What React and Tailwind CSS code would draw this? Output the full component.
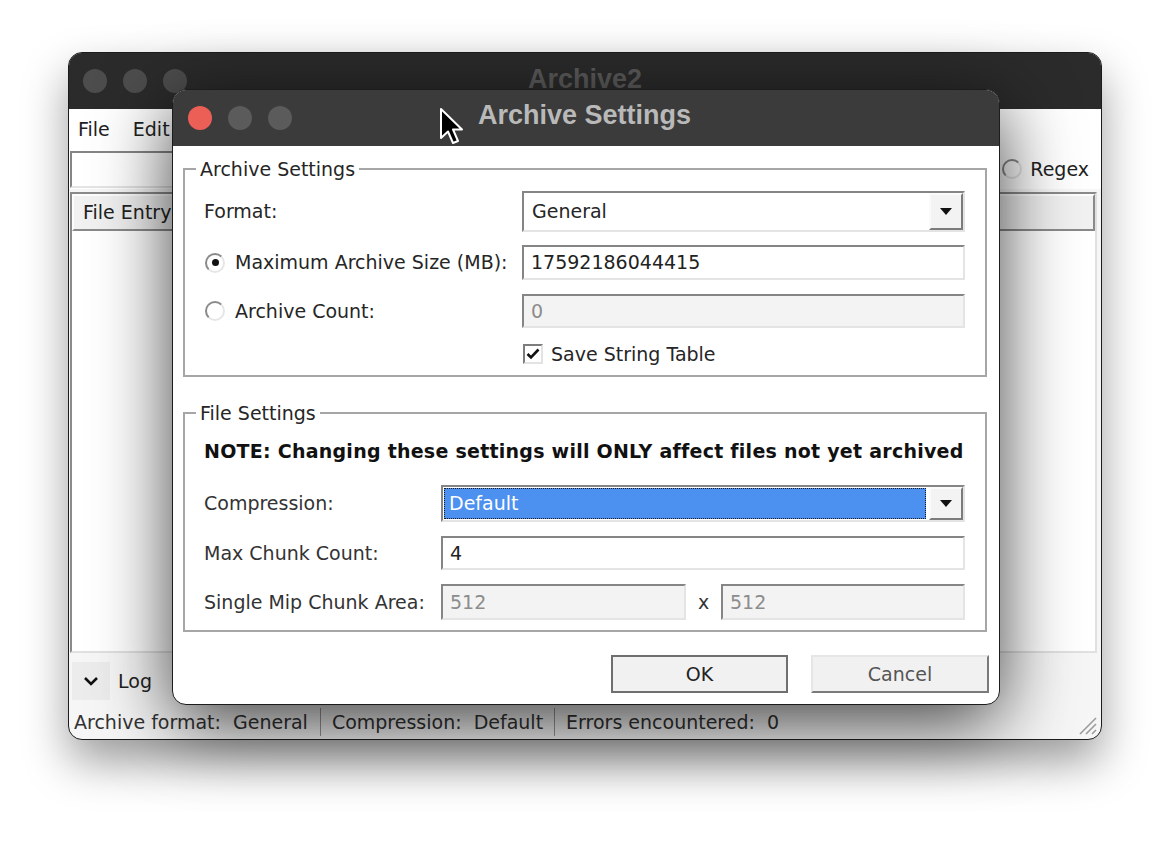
import React from 'react';

const UI = "font-['DejaVu_Sans',sans-serif]";
const TITLE = "font-['Liberation_Sans',Arial,sans-serif] font-bold text-[27px]";

const SUNKEN = 'border-2 border-t-[#858585] border-l-[#858585] border-b-[#e4e4e4] border-r-[#e4e4e4]';

function Light({ color }) {
  return <div className={`w-[24px] h-[24px] rounded-full ${color}`} />;
}

function TextBox({ value, disabled, className = '' }) {
  return (
    <div
      className={`${SUNKEN} flex items-center px-[7px] text-[19px] ${
        disabled ? 'bg-[#f3f3f3] text-[#8c8c8c]' : 'bg-white text-[#222]'
      } ${className}`}
    >
      {value}
    </div>
  );
}

function DropArrow() {
  return (
    <div className="w-[34px] self-stretch bg-[#f3f3f3] border-2 border-t-[#fafafa] border-l-[#fafafa] border-b-[#7c7c7c] border-r-[#7c7c7c] flex items-center justify-center">
      <svg width="12" height="8" viewBox="0 0 12 8">
        <path d="M0 0 L12 0 L6 7 Z" fill="#111" />
      </svg>
    </div>
  );
}

function Radio({ checked }) {
  return (
    <div className="w-[20px] h-[20px] rounded-full bg-white border-2 border-t-[#8a8a8a] border-l-[#8a8a8a] border-b-[#e6e6e6] border-r-[#e6e6e6] flex items-center justify-center shrink-0">
      {checked && <div className="w-[7px] h-[7px] rounded-full bg-[#111]" />}
    </div>
  );
}

function Checkbox() {
  return (
    <div className="w-[20px] h-[20px] bg-white border-2 border-t-[#7d7d7d] border-l-[#7d7d7d] border-b-[#e3e3e3] border-r-[#e3e3e3] flex items-center justify-center shrink-0">
      <svg width="14" height="12" viewBox="0 0 14 12">
        <path d="M1.5 6 L5 9.5 L12.5 1.5" stroke="#111" strokeWidth="2.6" fill="none" />
      </svg>
    </div>
  );
}

function MainWindow() {
  return (
    <div className={`absolute left-[68px] top-[52px] w-[1034px] h-[688px] rounded-[14px] border border-[#1c1c1c] overflow-hidden flex flex-col bg-[#f6f6f6] shadow-[0_22px_45px_rgba(0,0,0,0.38)] ${UI}`}>
      <div className="h-[56px] bg-[#2b2b2b] relative flex items-center pl-[14px] gap-[16px] shrink-0">
        <Light color="bg-[#4d4d4d]" />
        <Light color="bg-[#4d4d4d]" />
        <Light color="bg-[#4d4d4d]" />
        <div className={`absolute inset-0 pb-[4px] flex items-center justify-center text-[#5b5b5b] ${TITLE}`}>Archive2</div>
      </div>
      <div className="h-[40px] bg-white flex items-center gap-[23px] pl-[9px] text-[19px] text-[#222] shrink-0">
        <span>File</span>
        <span>Edit</span>
        <span>Help</span>
      </div>
      <div className="h-[40px] bg-white flex items-center pl-[1px] pr-[12px] gap-[8px] shrink-0">
        <div className={`${SUNKEN} flex-1 h-[37px] bg-white`} />
        <Radio />
        <span className="text-[19px] text-[#222]">Regex</span>
      </div>
      <div className="flex-1 mt-[3px] mx-[1px] mr-[4px] border-2 border-t-[#8a8a8a] border-l-[#8a8a8a] border-b-[#e0e0e0] border-r-[#e0e0e0] bg-white flex flex-col">
        <div className="h-[37px] bg-[#f1f1f1] border-2 border-t-[#fdfdfd] border-l-[#fdfdfd] border-b-[#8a8a8a] border-r-[#8a8a8a] flex items-center pl-[9px] text-[19px] text-[#222]">
          File Entry
        </div>
      </div>
      <div className="h-[52px] flex items-center pl-[3px] pt-[4px] gap-[8px] shrink-0">
        <div className="w-[38px] h-[38px] bg-[#ececec] flex items-center justify-center">
          <svg width="16" height="10" viewBox="0 0 16 10">
            <path d="M2 2 L8 8 L14 2" stroke="#111" strokeWidth="2.6" fill="none" />
          </svg>
        </div>
        <span className="text-[19px] text-[#222]">Log</span>
      </div>
      <div className="h-[34px] flex items-center text-[19px] text-[#333] shrink-0 relative">
        <div className="pl-[5px] pr-[12px] whitespace-pre">Archive format:  General</div>
        <div className="w-[1px] h-[28px] bg-[#9a9a9a]" />
        <div className="px-[11px] whitespace-pre">Compression:  Default</div>
        <div className="w-[1px] h-[28px] bg-[#9a9a9a]" />
        <div className="px-[11px] whitespace-pre">Errors encountered:  0</div>
        <svg className="absolute right-[3px] bottom-[3px]" width="24" height="24" viewBox="0 0 24 24">
          <path d="M22 6 L6 22 M22 12 L12 22 M22 18 L18 22" stroke="#9c9c9c" strokeWidth="1.6" />
        </svg>
      </div>
    </div>
  );
}

function Dialog() {
  return (
    <div className={`absolute left-[172px] top-[89px] w-[828px] h-[616px] rounded-[14px] border border-[#1c1c1c] overflow-hidden flex flex-col bg-white shadow-[0_18px_75px_rgba(0,0,0,0.75)] ${UI}`}>
      <div className="h-[56px] bg-[#3b3b3b] relative flex items-center pl-[15px] gap-[16px] shrink-0">
        <Light color="bg-[#ec5f57]" />
        <Light color="bg-[#5b5b5b]" />
        <Light color="bg-[#5b5b5b]" />
        <div className={`absolute inset-0 pb-[5px] pr-[3px] flex items-center justify-center text-[#b9b9b9] ${TITLE}`}>Archive Settings</div>
      </div>

      <div className="flex flex-col pl-[10px] pr-[12px] text-[19px] text-[#262626]">
        <fieldset className="min-w-0 mt-[11px] border-2 border-[#a6a6a6] pl-[19px] pr-[20px] pb-[9px]">
          <legend className="-ml-[8px] px-[4px] leading-[24px]">Archive Settings</legend>
          <div className="mt-[10px] flex items-center h-[41px]">
            <div className="w-[318px]">Format:</div>
            <div className={`${SUNKEN} flex-1 h-full bg-white flex items-center`}>
              <span className="flex-1 pl-[8px]">General</span>
              <DropArrow />
            </div>
          </div>
          <div className="mt-[13px] flex items-center h-[35px]">
            <div className="w-[318px] flex items-center gap-[10px] pl-[1px]">
              <Radio checked />
              <span>Maximum Archive Size (MB):</span>
            </div>
            <TextBox value="17592186044415" className="flex-1 h-full" />
          </div>
          <div className="mt-[14px] flex items-center h-[34px]">
            <div className="w-[318px] flex items-center gap-[10px] pl-[1px]">
              <Radio />
              <span>Archive Count:</span>
            </div>
            <TextBox value="0" disabled className="flex-1 h-full" />
          </div>
          <div className="mt-[14px] flex items-center h-[24px] pl-[319px] gap-[8px]">
            <Checkbox />
            <span>Save String Table</span>
          </div>
        </fieldset>

        <fieldset className="min-w-0 mt-[24px] border-2 border-[#a6a6a6] pl-[19px] pr-[20px] pb-[10px]">
          <legend className="-ml-[8px] px-[4px] leading-[24px]">File Settings</legend>
          <div className="mt-[14px] h-[24px] leading-[24px] font-bold whitespace-nowrap text-[#111] tracking-[0.25px]">
            NOTE: Changing these settings will ONLY affect files not yet archived
          </div>
          <div className="mt-[22px] flex items-center h-[37px]">
            <div className="w-[237px] text-[#333]">Compression:</div>
            <div className={`${SUNKEN} flex-1 h-full bg-white flex items-center`}>
              <div className="flex-1 self-stretch my-[1px] ml-[1px] mr-[3px] bg-[#4d91f0] border border-dotted border-[#1a1a1a] flex items-center pl-[4px] text-white">
                Default
              </div>
              <DropArrow />
            </div>
          </div>
          <div className="mt-[14px] flex items-center h-[34px]">
            <div className="w-[237px] text-[#333]">Max Chunk Count:</div>
            <TextBox value="4" className="flex-1 h-full" />
          </div>
          <div className="mt-[14px] flex items-center h-[36px]">
            <div className="w-[237px] text-[#333]">Single Mip Chunk Area:</div>
            <TextBox value="512" disabled className="w-[245px] h-full" />
            <div className="w-[35px] text-center text-[#333]">x</div>
            <TextBox value="512" disabled className="flex-1 h-full" />
          </div>
        </fieldset>

        <div className="mt-[23px] flex justify-end gap-[23px] -mr-[2px]">
          <div className="w-[177px] h-[38px] bg-[#f1f1f1] border-2 border-[#6f6f6f] flex items-center justify-center text-[#222]">
            OK
          </div>
          <div className="w-[178px] h-[38px] bg-[#f1f1f1] border-2 border-t-[#e6e6e6] border-l-[#e6e6e6] border-b-[#7a7a7a] border-r-[#7a7a7a] flex items-center justify-center text-[#555]">
            Cancel
          </div>
        </div>
      </div>
    </div>
  );
}

function Cursor() {
  return (
    <svg className="absolute left-[439px] top-[107px]" width="26" height="40" viewBox="0 0 26 40">
      <path
        d="M2 2 L2 31 L9 24.5 L14 36 L19 34 L14 22.5 L23 22.5 Z"
        fill="#000"
        stroke="#fff"
        strokeWidth="2"
        strokeLinejoin="round"
      />
    </svg>
  );
}

export default function App() {
  return (
    <div className="relative w-[1170px] h-[854px] bg-white overflow-hidden">
      <MainWindow />
      <Dialog />
      <Cursor />
    </div>
  );
}
